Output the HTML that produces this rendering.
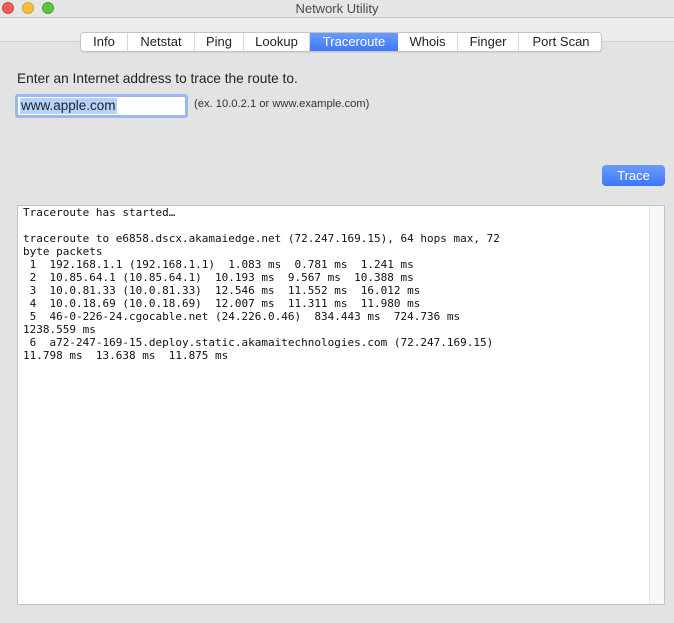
<!DOCTYPE html>
<html><head><style>
*{margin:0;padding:0;box-sizing:border-box}
body{width:674px;height:623px;background:#e3e3e3;font-family:"Liberation Sans",sans-serif;position:relative;overflow:hidden;color:#222}
.tb{position:absolute;left:0;top:0;width:674px;height:18px;background:#e6e6e6;border-bottom:1px solid #c8c8c8}
.tb2{position:absolute;left:0;top:18px;width:674px;height:24px;background:#ececec;border-bottom:1px solid #d2d2d2}
.title{position:absolute;top:1px;width:674px;text-align:center;font-size:13px;color:#4a4a4a}
.dot{position:absolute;top:2px;width:12px;height:12px;border-radius:50%}
.tabs{position:absolute;left:80px;top:32px;height:20px;width:522px;background:#fff;border:1px solid #c4c4c4;border-radius:4px;box-shadow:0 1px 1px rgba(0,0,0,.08);overflow:hidden}
.tab{position:absolute;top:0;height:18px;font-size:13px;line-height:18px;text-align:center;border-right:1px solid #d8d8d8;color:#222}
.tab.on{background:linear-gradient(#6a9cff,#3f78fa);color:#fff;border-right:none}
.lbl{position:absolute;left:17px;top:71px;font-size:13.7px}
.inp{position:absolute;left:15px;top:94px;width:173px;height:24px;border:3px solid #9cb6ef;border-radius:3px;background:#fff}
.inp span{position:absolute;left:2px;top:1px;font-size:13.5px;background:#b3d2fc;line-height:16px;padding:0 1px}
.hint{position:absolute;left:194px;top:98px;font-size:11.2px;color:#333}
.btn{position:absolute;left:602px;top:165px;width:63px;height:21px;border-radius:4px;background:linear-gradient(#6b9dff,#3c76f9);color:#fff;font-size:13px;text-align:center;line-height:21px}
.out{position:absolute;left:17px;top:205px;width:648px;height:400px;background:#fff;border:1px solid #c2c2c2}
.sb{position:absolute;right:0;top:0;width:15px;height:398px;background:#f7f7f7;border-left:1px solid #e6e6e6}
pre{position:absolute;left:5px;top:0px;font-family:"DejaVu Sans Mono","Liberation Mono",monospace;font-size:11.0px;line-height:13px;color:#111}
</style></head><body>
<div class="tb"></div><div class="tb2"></div>
<div class="title">Network Utility</div>
<div class="dot" style="left:2px;background:#ec5f57;border:1px solid #d2473f"></div>
<div class="dot" style="left:22px;background:#f4be3b;border:1px solid #d9a22c"></div>
<div class="dot" style="left:42px;background:#5fc441;border:1px solid #4ca632"></div>
<div class="tabs">
<div class="tab" style="left:0;width:47px">Info</div>
<div class="tab" style="left:47px;width:67px">Netstat</div>
<div class="tab" style="left:114px;width:49px">Ping</div>
<div class="tab" style="left:163px;width:66px">Lookup</div>
<div class="tab on" style="left:229px;width:88px">Traceroute</div>
<div class="tab" style="left:317px;width:60px">Whois</div>
<div class="tab" style="left:377px;width:61px">Finger</div>
<div class="tab" style="left:438px;width:84px;border-right:none">Port Scan</div>
</div>
<div class="lbl">Enter an Internet address to trace the route to.</div>
<div class="inp"><span>www.apple.com</span></div>
<div class="hint">(ex. 10.0.2.1 or www.example.com)</div>
<div class="btn">Trace</div>
<div class="out"><div class="sb"></div><pre>Traceroute has started…

traceroute to e6858.dscx.akamaiedge.net (72.247.169.15), 64 hops max, 72
byte packets
 1  192.168.1.1 (192.168.1.1)  1.083 ms  0.781 ms  1.241 ms
 2  10.85.64.1 (10.85.64.1)  10.193 ms  9.567 ms  10.388 ms
 3  10.0.81.33 (10.0.81.33)  12.546 ms  11.552 ms  16.012 ms
 4  10.0.18.69 (10.0.18.69)  12.007 ms  11.311 ms  11.980 ms
 5  46-0-226-24.cgocable.net (24.226.0.46)  834.443 ms  724.736 ms
1238.559 ms
 6  a72-247-169-15.deploy.static.akamaitechnologies.com (72.247.169.15)
11.798 ms  13.638 ms  11.875 ms</pre></div>
</body></html>
